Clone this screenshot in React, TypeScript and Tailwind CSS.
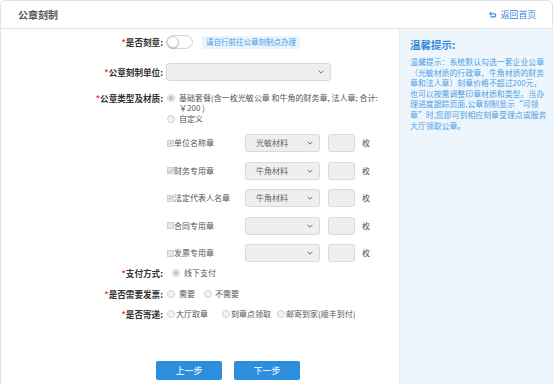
import React from "react";

const Star = () => <span className="text-[#e4393c]">*</span>;

function Radio({ checked = false }: { checked?: boolean }) {
  return (
    <span className="inline-flex w-[8px] h-[8px] shrink-0 items-center justify-center rounded-full border border-[#cfcfcf] bg-[#f3f3f3]">
      {checked && <span className="w-[4px] h-[4px] rounded-full bg-[#bdbdbd]" />}
    </span>
  );
}

function Check({ checked = false }: { checked?: boolean }) {
  return (
    <span className="inline-flex w-[7px] h-[7px] shrink-0 items-center justify-center border border-[#cfcfcf] bg-[#e6e6e6]">
      {checked && (
        <svg viewBox="0 0 8 8" className="w-[6px] h-[6px]">
          <path d="M1 4.2 L3.2 6.2 L7 1.6" fill="none" stroke="#a9a9a9" strokeWidth="1.3" />
        </svg>
      )}
    </span>
  );
}

function Chevron() {
  return (
    <svg viewBox="0 0 10 6" className="w-[6px] h-[4px]">
      <path d="M1 1 L5 5 L9 1" fill="none" stroke="#666" strokeWidth="1.6" />
    </svg>
  );
}

function Label({ children }: { children: React.ReactNode }) {
  return (
    <div className="w-[165px] shrink-0 text-right text-[8.6px] leading-[10px] font-bold text-[#333] pr-[3px]">
      {children}
    </div>
  );
}

const stamps = [
  { name: "单位名称章", checked: true, material: "光敏材料" },
  { name: "财务专用章", checked: true, material: "牛角材料" },
  { name: "法定代表人名章", checked: true, material: "牛角材料" },
  { name: "合同专用章", checked: false, material: "" },
  { name: "发票专用章", checked: false, material: "" },
];

const tips = [
  "温馨提示：系统默认勾选一套企业公章",
  "（光敏材质的行政章、牛角材质的财务",
  "章和法人章）刻章价格不超过200元，",
  "也可以按需调整印章材质和类型。当办",
  "理进度跟踪页面,公章刻制显示\u201c可领",
  "章\u201d时,您即可到相应刻章受理点或服务",
  "大厅领取公章。",
];

export default function App() {
  return (
    <div className="w-[554px] h-[384px] bg-white overflow-hidden font-['Noto_Sans_CJK_SC','Liberation_Sans',sans-serif]">
      <div className="h-[400px] w-[553px] border border-[#e4e4e4] rounded-[5px] flex flex-col">
        {/* header */}
        <div className="h-[28px] shrink-0 border-b border-[#e4e4e4] flex items-center justify-between pl-[17px] pr-[16px]">
          <span className="text-[10px] font-bold text-[#555]">公章刻制</span>
          <span className="flex items-center gap-[4px] text-[8.8px] text-[#2f86d4]">
            <svg viewBox="0 0 10 8" className="w-[8px] h-[7px]">
              <path d="M3 1 L1 3 L3 5" fill="none" stroke="#2f86d4" strokeWidth="1.4" />
              <path d="M1.5 3 H6.5 A2 2 0 0 1 6.5 7 H2" fill="none" stroke="#2f86d4" strokeWidth="1.4" />
            </svg>
            返回首页
          </span>
        </div>

        <div className="flex flex-1">
          {/* form */}
          <div className="w-[398px] shrink-0 flex flex-col text-[8px] text-[#555]">
            <div className="mt-[6px] h-[14px] flex items-center">
              <Label>
                <Star />是否刻章:
              </Label>
              <span className="w-[27px] h-[14px] rounded-full border border-[#d8d8d8] bg-white flex items-center shadow-[inset_0_0_1px_#ddd]">
                <span className="w-[12px] h-[12px] rounded-full bg-white border border-[#d0d0d0] shadow-[0_1px_1px_rgba(0,0,0,0.2)]" />
              </span>
              <span className="ml-[9px] h-[13px] px-[4px] flex items-center bg-[#e9f4fd] text-[#4a9ce2] text-[7.5px] rounded-[2px]">
                请自行前往公章刻制点办理
              </span>
            </div>

            <div className="mt-[14px] h-[18px] flex items-center">
              <Label>
                <Star />公章刻制单位:
              </Label>
              <div className="w-[165px] h-[18px] rounded-[3px] border border-[#d9d9d9] bg-[#efefef] flex items-center justify-end pr-[6px]">
                <Chevron />
              </div>
            </div>

            <div className="mt-[12px] flex items-start">
              <Label>
                <Star />公章类型及材质:
              </Label>
              <div className="flex flex-col">
                <div className="flex items-center h-[10px] gap-[4px] pl-[1px]">
                  <Radio checked />
                  <span>基础套餐(含一枚光敏公章 和牛角的财务章, 法人章; 合计:</span>
                </div>
                <div className="h-[9px] leading-[9px] pl-[13px]">￥200 )</div>
                <div className="mt-[2px] flex items-center h-[10px] gap-[4px] pl-[1px]">
                  <Radio />
                  <span>自定义</span>
                </div>
              </div>
            </div>

            <div className="mt-[10px] flex flex-col gap-[9.5px]">
              {stamps.map((s) => (
                <div key={s.name} className="h-[18px] flex items-center">
                  <div className="w-[165px] shrink-0" />
                  <div className="w-[79px] shrink-0 flex items-center pl-[1px]">
                    <Check checked={s.checked} />
                    <span>{s.name}</span>
                  </div>
                  <div className="w-[75px] h-[18px] rounded-[3px] border border-[#d9d9d9] bg-[#efefef] flex items-center justify-between pl-[10px] pr-[6px] text-[#666]">
                    <span>{s.material}</span>
                    <Chevron />
                  </div>
                  <div className="ml-[8px] w-[27px] h-[18px] rounded-[3px] border border-[#d9d9d9] bg-[#efefef]" />
                  <span className="ml-[7px]">枚</span>
                </div>
              ))}
            </div>

            <div className="mt-[6px] h-[10px] flex items-center">
              <Label>
                <Star />支付方式:
              </Label>
              <span className="ml-[6px] flex items-center gap-[4px]">
                <Radio checked />
                线下支付
              </span>
            </div>

            <div className="mt-[11px] h-[10px] flex items-center">
              <Label>
                <Star />是否需要发票:
              </Label>
              <span className="ml-[1px] flex items-center gap-[4px]">
                <Radio />
                需要
              </span>
              <span className="ml-[9px] flex items-center gap-[3px]">
                <Radio />
                不需要
              </span>
            </div>

            <div className="mt-[10px] h-[10px] flex items-center">
              <Label>
                <Star />是否寄递:
              </Label>
              <span className="ml-[1px] w-[55px] flex items-center gap-[1px]">
                <Radio />
                大厅取章
              </span>
              <span className="w-[55px] flex items-center gap-[1px]">
                <Radio />
                刻章点领取
              </span>
              <span className="flex items-center gap-[1px]">
                <Radio />
                邮寄到家(顺丰到付)
              </span>
            </div>

            <div className="mt-[42px] pl-[155px] flex gap-[12px]">
              <button className="w-[66px] h-[19px] rounded-[2px] bg-[#2d8ede] text-white text-[9px]">上一步</button>
              <button className="w-[66px] h-[19px] rounded-[2px] bg-[#2d8ede] text-white text-[9px]">下一步</button>
            </div>
          </div>

          {/* tips */}
          <div className="flex-1 bg-[#eef6fd] border-l border-[#e2edf7] px-[10px] pt-[10px]">
            <div className="text-[10.5px] leading-[12px] font-bold text-[#3a8ad6]">温馨提示:</div>
            <div className="mt-[6px] text-[7.9px] leading-[10.6px] text-[#4d9ee3] whitespace-nowrap">
              {tips.map((t) => (
                <div key={t}>{t}</div>
              ))}
            </div>
          </div>
        </div>
      </div>
    </div>
  );
}
